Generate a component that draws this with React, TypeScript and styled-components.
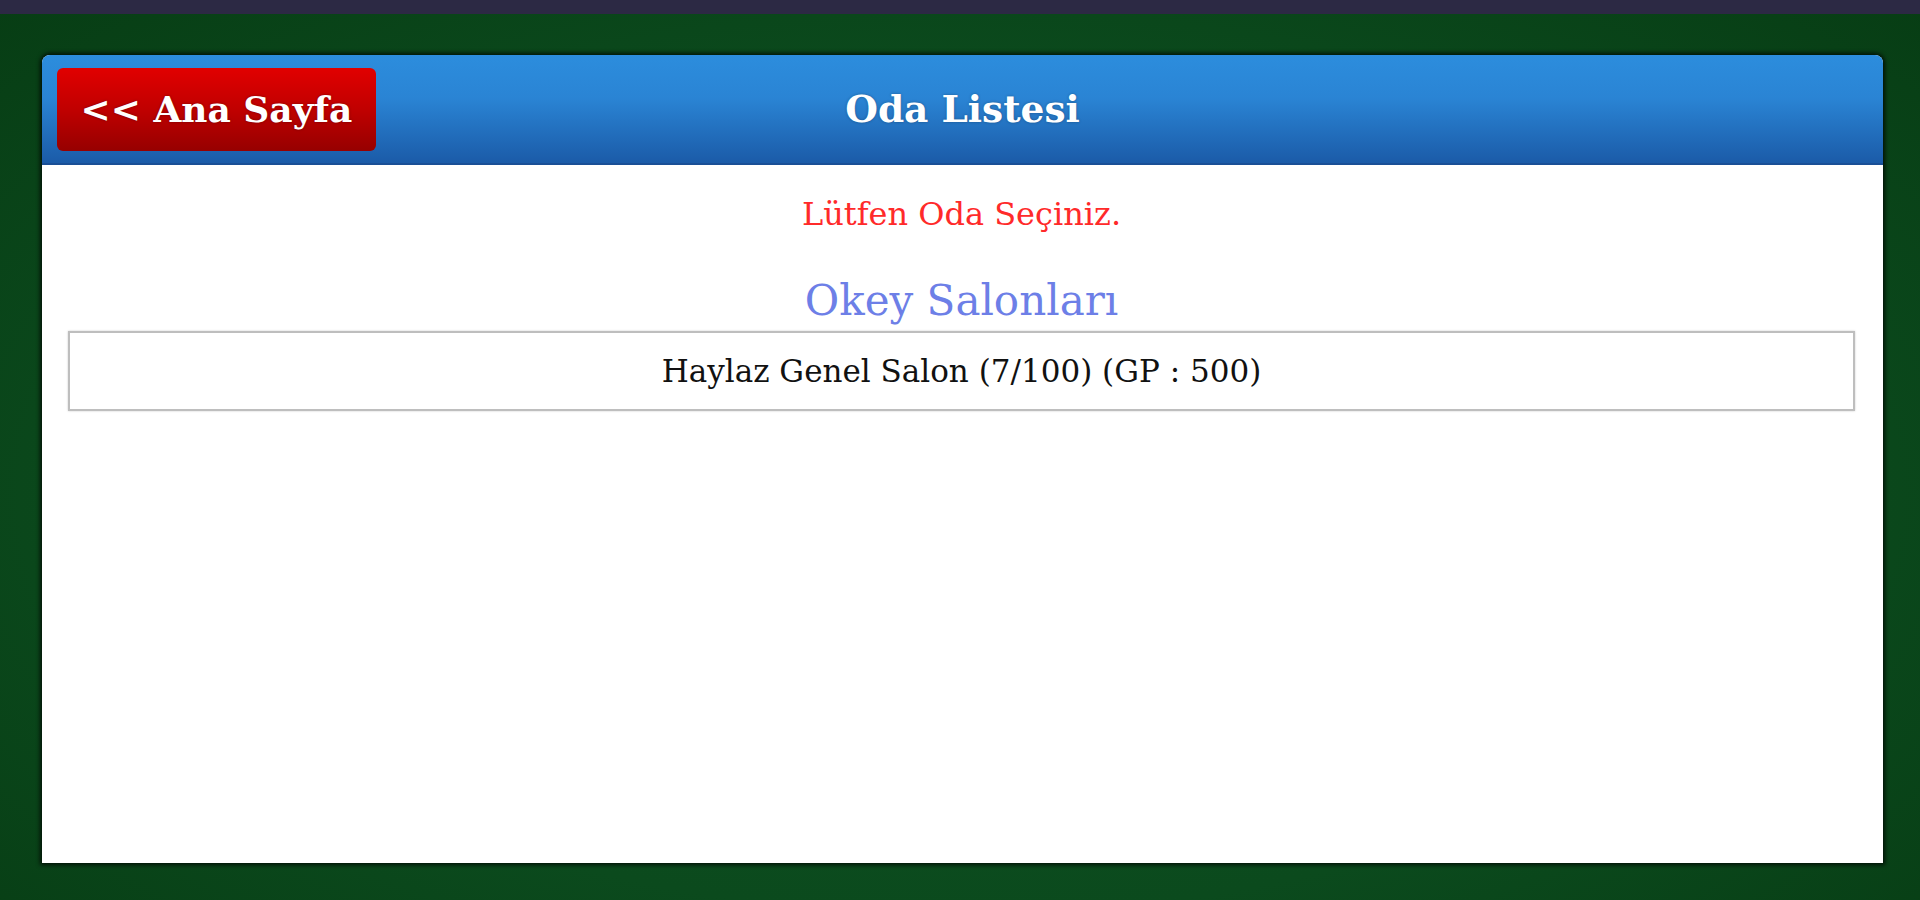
import React from "react";
import styled, { createGlobalStyle } from "styled-components";

const GlobalStyle = createGlobalStyle`
  html, body {
    margin: 0;
    padding: 0;
    height: 100%;
  }
  body {
    background-color: #0b4a1d;
    font-family: "DejaVu Serif", "Liberation Serif", serif;
  }
  #root {
    min-height: 100%;
  }
`;

const Page = styled.div`
  width: 1920px;
  height: 900px;
  display: flex;
  flex-direction: column;
  overflow: hidden;
  background: radial-gradient(ellipse at 50% 55%, #0e5223 0%, #0b4a1d 60%, #073d14 100%);
`;

const TopBar = styled.div`
  height: 14px;
  flex-shrink: 0;
  background-color: #2c2944;
`;

const Panel = styled.div`
  flex: 1;
  margin: 41px 37px 37px 42px;
  display: flex;
  flex-direction: column;
  background-color: #ffffff;
  border-radius: 8px 8px 0 0;
  box-shadow: 0 0 4px 2px rgba(0, 0, 0, 0.75);
`;

const Header = styled.div`
  height: 108px;
  flex-shrink: 0;
  display: grid;
  grid-template-columns: 1fr auto 1fr;
  align-items: center;
  padding: 0 15px;
  border-radius: 8px 8px 0 0;
  background: linear-gradient(to bottom, #2c8ddd 0%, #2a84d4 40%, #1b5ba8 100%);
  border-bottom: 2px solid #1a4f96;
`;

const BackButton = styled.a`
  justify-self: start;
  width: 319px;
  height: 83px;
  display: flex;
  align-items: center;
  justify-content: center;
  border-radius: 6px;
  background: linear-gradient(to bottom, #e10000 0%, #c00000 50%, #960000 100%);
  color: #ffffff;
  font-weight: bold;
  font-size: 36px;
  text-decoration: none;
  text-shadow: 0 0 3px rgba(0, 0, 0, 0.35);
  cursor: pointer;
`;

const Title = styled.h1`
  margin: 0;
  color: #ffffff;
  font-size: 37.5px;
  font-weight: bold;
  text-shadow: 0 0 3px rgba(0, 0, 0, 0.3);
`;

const Body = styled.div`
  display: flex;
  flex-direction: column;
  align-items: center;
  padding: 0 28px 0 26px;
`;

const Notice = styled.p`
  margin: 27px 0 0;
  color: #ff2a2a;
  font-size: 32px;
  line-height: 44px;
`;

const SectionTitle = styled.h2`
  margin: 40px 0 0;
  color: #6d7fe7;
  font-size: 42px;
  font-weight: normal;
  line-height: 50px;
`;

const RoomList = styled.div`
  align-self: stretch;
  margin-top: 5px;
`;

const RoomRow = styled.div`
  height: 76px;
  display: flex;
  align-items: center;
  justify-content: center;
  border: 2px solid #bebebe;
  box-shadow: 0 0 2px rgba(0, 0, 0, 0.2);
  color: #111111;
  font-size: 31px;
  cursor: pointer;
`;

const rooms = [{ name: "Haylaz Genel Salon", users: 7, max: 100, gp: 500 }];

export default function App() {
  return (
    <>
      <GlobalStyle />
      <Page>
        <TopBar />
        <Panel>
          <Header>
            <BackButton>&lt;&lt; Ana Sayfa</BackButton>
            <Title>Oda Listesi</Title>
          </Header>
          <Body>
            <Notice>Lütfen Oda Seçiniz.</Notice>
            <SectionTitle>Okey Salonları</SectionTitle>
            <RoomList>
              {rooms.map(room => (
                <RoomRow key={room.name}>
                  {room.name} ({room.users}/{room.max}) (GP : {room.gp})
                </RoomRow>
              ))}
            </RoomList>
          </Body>
        </Panel>
      </Page>
    </>
  );
}
